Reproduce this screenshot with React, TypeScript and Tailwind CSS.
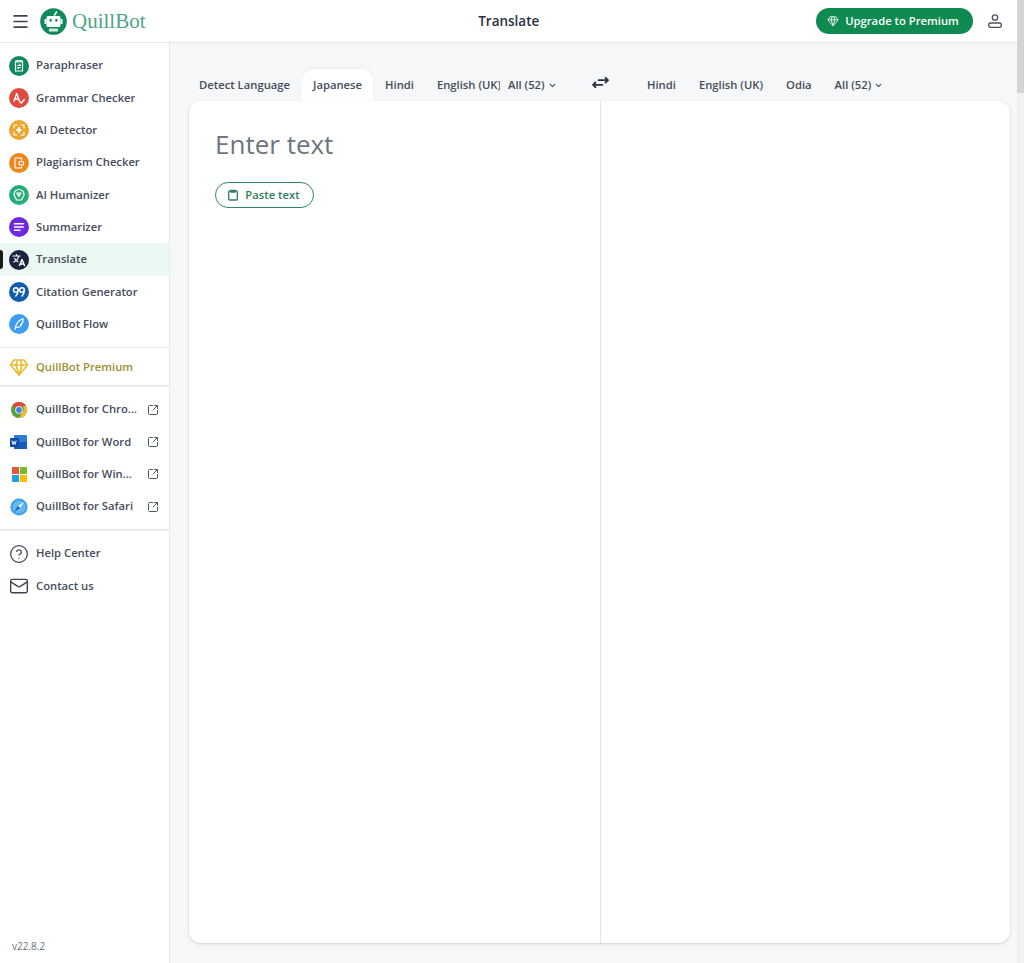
import { Menu, SquareArrowOutUpRight, CircleHelp, Mail, ChevronDown } from 'lucide-react';
import type { ReactNode } from 'react';

const Disc = ({ color, children }: { color: string; children: ReactNode }) => (
  <span className={`w-[20px] h-[20px] rounded-full flex items-center justify-center shrink-0 ${color}`}>
    <svg viewBox="0 0 20 20" className="w-[20px] h-[20px]" fill="none" stroke="#fff" strokeWidth="1.2" strokeLinecap="round" strokeLinejoin="round">
      {children}
    </svg>
  </span>
);

const GemIcon = ({ className, stroke, width = 1.4 }: { className: string; stroke: string; width?: number }) => (
  <svg viewBox="0 0 20 20" className={className} fill="none" stroke={stroke} strokeWidth={width} strokeLinejoin="round">
    <path d="M5 3h10l3.500 5L10 18 1.500 8z" />
    <path d="M1.500 8h17M7 8l3 10 3-10M7 8l1.500-5M13 8l-1.500-5" />
  </svg>
);

const tools = [
  { label: 'Paraphraser', icon: <Disc color="bg-[#0f8a5c]"><path d="M8 5H6.500v10h7V5H12" /><path d="M8 4.500h4v1.500H8zM8.500 9.500h3l-1-1M11.500 11.500h-3l1 1" /></Disc> },
  { label: 'Grammar Checker', icon: <Disc color="bg-[#e04a3f]"><path d="M5 13l2.700-7.500 2.700 7.500M6 11h3.400" strokeWidth="1.400" /><path d="M11 14l1.300 1 3-3.500" strokeWidth="1.400" /></Disc> },
  { label: 'AI Detector', icon: <Disc color="bg-[#eba62f]"><path d="M5 8V5h3M12 5h3v3M15 12v3h-3M8 15H5v-3" /><path d="M10 7.500l.8 1.700 1.700.8-1.700.8-.8 1.700-.8-1.700-1.700-.8 1.700-.8z" fill="#fff" /></Disc> },
  { label: 'Plagiarism Checker', icon: <Disc color="bg-[#ee8719]"><path d="M12.500 7V5H6v10h6.500v-1.500" /><rect x="10" y="8.500" width="4.500" height="3.500" rx="1" /></Disc> },
  { label: 'AI Humanizer', icon: <Disc color="bg-[#25ad78]"><path d="M5 9.500a5 5 0 0 1 10 0c0 2-1.800 2.500-2.500 5.500h-5C6.800 12 5 11.500 5 9.500z" /><path d="M7.800 8h4.400L10 11.500zM9 8l1 3.500L11 8" strokeWidth="0.900" /></Disc> },
  { label: 'Summarizer', icon: <Disc color="bg-[#6d28e0]"><path d="M5.500 6.800h9M5.500 10h9M5.500 13.200h5.500" strokeWidth="1.500" /></Disc> },
  { label: 'Translate', active: true, icon: <Disc color="bg-[#1b2540]"><path d="M4 6h7M7.500 4.500V6M9.700 6c-.5 2.800-2.500 5-5 6M5.700 8.500c.8 1.600 2 2.800 3.300 3.300" /><path d="M10.500 15.500l2.500-6 2.500 6M11.300 14h3.500" strokeWidth="1.400" /></Disc> },
  { label: 'Citation Generator', icon: <Disc color="bg-[#0f5cb0]"><circle cx="6.800" cy="8" r="2.300" strokeWidth="1.500" /><path d="M9.100 8c0 2.800-.8 4.600-2.300 6" strokeWidth="1.500" /><circle cx="13" cy="8" r="2.300" strokeWidth="1.500" /><path d="M15.300 8c0 2.800-.8 4.600-2.300 6" strokeWidth="1.500" /></Disc> },
  { label: 'QuillBot Flow', icon: <Disc color="bg-[#3b9cf2]"><path d="M6 15.500C6.500 11 9 6.500 14 4.500c.3 3-.7 5-2.300 6l.8.500c-1.200 2-3.500 2.500-5.200 2.200" /></Disc> },
];

const ChromeIcon = () => (
  <svg viewBox="0 0 20 20" className="w-[20px] h-[20px]">
    <circle cx="10" cy="10" r="8" fill="#5a9f3e" />
    <path d="M10 2a8 8 0 0 1 6.930 4H10a4 4 0 0 0-3.500 2L3.600 5.200A8 8 0 0 1 10 2z" fill="#e5483d" />
    <path d="M16.930 6A8 8 0 0 1 10 18l3.500-6a4 4 0 0 0 0-6z" fill="#f2b92c" />
    <circle cx="10" cy="10" r="3.800" fill="#f4f4f4" />
    <circle cx="10" cy="10" r="2.900" fill="#3f83e6" />
  </svg>
);

const WordIcon = () => (
  <svg viewBox="0 0 20 20" className="w-[20px] h-[20px]">
    <rect x="5" y="3" width="13" height="14" rx="1" fill="#2b7cd3" />
    <rect x="5" y="10" width="13" height="7" fill="#185abd" />
    <rect x="1" y="6" width="9" height="9" rx="1" fill="#114ba0" />
    <path d="M3 8.500l1 4 1-3 1 3 1.200-4" fill="none" stroke="#fff" strokeWidth="0.900" />
  </svg>
);

const WindowsIcon = () => (
  <span className="w-[20px] h-[20px] grid grid-cols-2 gap-px p-[2.500px] shrink-0">
    <span className="bg-[#e8563a]" />
    <span className="bg-[#7db828]" />
    <span className="bg-[#1fa3e6]" />
    <span className="bg-[#fbbc09]" />
  </span>
);

const SafariIcon = () => (
  <svg viewBox="0 0 20 20" className="w-[20px] h-[20px]">
    <circle cx="10" cy="10" r="8.500" fill="#3ba0ec" />
    <circle cx="10" cy="10" r="6.500" fill="#66b8f3" />
    <path d="M15 5l-4 6-2-2z" fill="#fff" />
    <path d="M5 15l6-4-2-2z" fill="#1c5fb0" />
  </svg>
);

const apps = [
  { label: 'QuillBot for Chrome', icon: <ChromeIcon /> },
  { label: 'QuillBot for Word', icon: <WordIcon /> },
  { label: 'QuillBot for Windows', icon: <WindowsIcon /> },
  { label: 'QuillBot for Safari', icon: <SafariIcon /> },
];

const NavRow = ({ icon, label, active = false }: { icon: ReactNode; label: string; active?: boolean }) => (
  <div className={`relative h-[32.33px] flex items-center gap-[7px] pl-[9px] pr-[10px] text-[11.250px] font-semibold text-[#454c5a] ${active ? 'bg-[#ebf9f2]' : ''}`}>
    {active && <span className="absolute left-0 top-[7px] w-[3px] h-[19px] rounded-r-sm bg-[#1a1a1a]" />}
    {icon}
    <span className="truncate">{label}</span>
  </div>
);

const Logo = () => (
  <div className="flex items-center gap-[5px]">
    <svg viewBox="0 0 27 27" className="w-[27px] h-[27px]">
      <circle cx="13.500" cy="13.500" r="13.300" fill="#0f8a5c" />
      <path d="M14.500 7l2-3" stroke="#fff" strokeWidth="1.600" strokeLinecap="round" />
      <rect x="6.500" y="8" width="14" height="11" rx="1.500" fill="#fff" />
      <rect x="4.500" y="11" width="2" height="5" fill="#fff" />
      <rect x="20.500" y="11" width="2" height="5" fill="#fff" />
      <rect x="9.500" y="11" width="2.200" height="2.600" fill="#0f8a5c" />
      <rect x="15.300" y="11" width="2.200" height="2.600" fill="#0f8a5c" />
      <rect x="9" y="20.500" width="9" height="3" fill="#d3ece0" />
    </svg>
    <span className="font-['Liberation_Serif',serif] text-[21px] leading-none text-[#4da586]">QuillBot</span>
  </div>
);

const LangTab = ({ label, active = false }: { label: string; active?: boolean }) => (
  <div className={`h-[32px] px-[11px] flex items-center shrink-0 whitespace-nowrap rounded-t-xl ${active ? 'bg-white shadow-[0_-1px_2px_rgba(0,0,0,0.04)]' : ''}`}>
    {label}
  </div>
);

const AllTab = () => (
  <div className="flex items-center gap-[3px] shrink-0 whitespace-nowrap">
    All (52)
    <ChevronDown className="w-[9px] h-[9px]" strokeWidth={3} />
  </div>
);

export default function App() {
  return (
    <div className="relative w-[1024px] h-[963px] overflow-hidden flex flex-col bg-white font-['Open_Sans',sans-serif]">
      <header className="h-[43px] shrink-0 flex items-center border-b border-[#e6e8eb] pl-[11px] pr-[21px]">
        <Menu className="w-[19px] h-[19px] text-[#3d4350] mr-[10px]" strokeWidth={2.200} />
        <Logo />
        <div className="flex-1 text-center text-[13.500px] font-semibold text-[#2b3140] pl-[56px]">Translate</div>
        <button className="h-[26px] w-[157px] pr-[3px] rounded-full bg-[#0f8a50] text-white text-[11.250px] font-semibold flex items-center justify-center gap-[6px] mr-[14px]">
          <GemIcon className="w-[12px] h-[12px]" stroke="#fff" />
          Upgrade to Premium
        </button>
        <svg viewBox="0 0 16 16" className="w-[16px] h-[16px]" fill="none" stroke="#4a505c" strokeWidth="1.300">
          <circle cx="8" cy="4.500" r="2.700" />
          <rect x="1.700" y="10" width="12.600" height="4.300" rx="2" />
        </svg>
      </header>

      <div className="flex-1 flex min-h-0">
        <aside className="w-[170px] shrink-0 flex flex-col border-r border-[#e6e8eb] bg-white">
          <nav className="pt-[6.500px] pb-[6.500px] border-b border-[#e6e8eb]">
            {tools.map(t => <NavRow key={t.label} {...t} />)}
          </nav>
          <div className="h-[39px] pt-[1px] flex items-center gap-[7px] pl-[9px] border-b-2 border-[#e6e8eb] text-[11.250px] font-semibold text-[#9c9030]">
            <GemIcon className="w-[20px] h-[20px]" stroke="#e8be35" width={1.700} />
            QuillBot Premium
          </div>
          <div className="pt-[6.500px] pb-[6.500px] border-b-2 border-[#e6e8eb]">
            {apps.map(a => (
              <div key={a.label} className="h-[32.33px] flex items-center gap-[7px] pl-[9px] pr-[10px] text-[11.250px] font-semibold text-[#454c5a]">
                {a.icon}
                <span className="truncate flex-1">{a.label}</span>
                <SquareArrowOutUpRight className="w-[12px] h-[12px] ml-[2.500px] shrink-0 text-[#4f5561]" strokeWidth={2} />
              </div>
            ))}
          </div>
          <div className="pt-[6.500px]">
            <NavRow label="Help Center" icon={<CircleHelp className="w-[20px] h-[20px] text-[#3d4350]" strokeWidth={1.500} />} />
            <NavRow label="Contact us" icon={<Mail className="w-[20px] h-[20px] text-[#3d4350]" strokeWidth={1.700} />} />
          </div>
          <div className="mt-auto pl-[12px] pb-[9px] text-[10px] text-[#6b7280]">v22.8.2</div>
        </aside>

        <main className="flex-1 min-w-0 bg-[#f5f7f9] pl-[19px] pr-[14px] pt-[26px] pb-[20px] flex flex-col">
          <div className="h-[32px] flex items-center text-[11.250px] font-semibold text-[#454c5a] shrink-0">
            <div className="w-[411px] flex items-center shrink-0">
              <div className="pl-[10px] pr-[11px] shrink-0 whitespace-nowrap">Detect Language</div>
              <div className="ml-px"><LangTab label="Japanese" active /></div>
              <div className="ml-px"><LangTab label="Hindi" /></div>
              <div className="w-[74px] ml-px overflow-hidden shrink-0 pl-[11px] whitespace-nowrap">English (UK)</div>
              <div className="ml-[8px]"><AllTab /></div>
              <svg viewBox="0 0 18 14" className="w-[17px] h-[13px] ml-[35px] -mt-[6px] shrink-0" fill="none" stroke="#2b3140" strokeWidth="2" strokeLinecap="round" strokeLinejoin="round">
                <path d="M7 4.500h10M14.500 2l2.500 2.500L14.500 7M11 9.500H1M3.500 7L1 9.500 3.500 12" />
              </svg>
            </div>
            <div className="flex items-center pl-[36px]">
              <LangTab label="Hindi" />
              <div className="ml-px"><LangTab label="English (UK)" /></div>
              <div className="ml-px"><LangTab label="Odia" /></div>
              <div className="ml-[12px]"><AllTab /></div>
            </div>
          </div>

          <section className="flex-1 flex bg-white rounded-xl shadow-[0_1px_3px_rgba(0,0,0,0.16)] min-h-0">
            <div className="w-[412px] shrink-0 border-r border-[#e3e5e8] pl-[26px] pt-[25px]">
              <div className="text-[26px] leading-[36px] text-[#6e7480]">Enter text</div>
              <button className="mt-[20px] h-[26px] w-[99px] pr-[2px] rounded-full border border-[#2c8a63] flex items-center justify-center gap-[6px] text-[11.250px] font-semibold text-[#2c7f5c]">
                <svg viewBox="0 0 12 12" className="w-[12px] h-[12px]" fill="none" stroke="#2c7f5c" strokeWidth="1.300">
                  <rect x="1.700" y="2" width="8.600" height="9" rx="1" />
                  <path d="M4 1.500h4V3H4z" fill="#2c7f5c" />
                </svg>
                Paste text
              </button>
            </div>
            <div className="flex-1" />
          </section>
        </main>
      </div>

      <div className="absolute right-0 top-0 bottom-0 w-[7px] bg-[#f1f2f3]">
        <div className="h-[93px] bg-[#d2d4d6]" />
      </div>
    </div>
  );
}
